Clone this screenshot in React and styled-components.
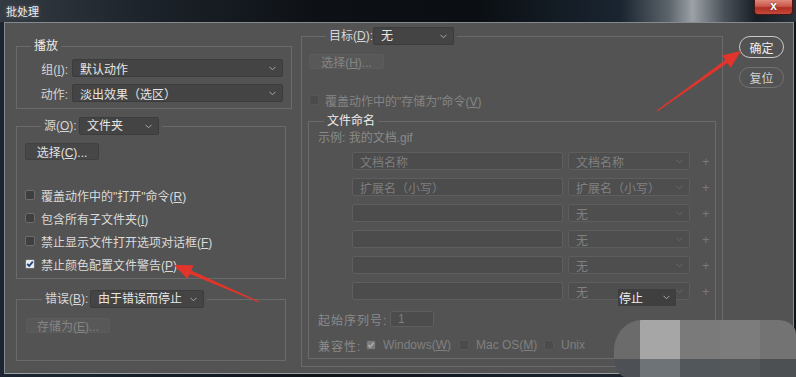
import React from "react";
import styled, { createGlobalStyle } from "styled-components";

const GlobalStyle = createGlobalStyle`
  html, body { margin: 0; padding: 0; background: #10151a; }
  body { font-family: "Liberation Sans", "Noto Sans CJK SC", sans-serif; }
  * { box-sizing: border-box; }
`;

const Window = styled.div`
  position: relative;
  width: 796px;
  height: 377px;
  overflow: hidden;
  display: flex;
  flex-direction: column;
  background: linear-gradient(90deg, #1c2530 0%, #0e1318 40%, #1b222b 75%, #0f1419 100%);
`;

const TitleBar = styled.div`
  height: 22px;
  flex: none;
  display: flex;
  justify-content: space-between;
  align-items: flex-start;
  background: linear-gradient(
    90deg,
    #343b43 0%,
    #1d232a 18%,
    #0d1116 40%,
    #0b0f13 60%,
    #1a2531 78%,
    #5c646b 84%,
    #9ba1a6 87%,
    #4a5158 91%,
    #181e25 95%,
    #2a3038 100%
  );
`;

const Title = styled.div`
  margin: 5px 0 0 6px;
  font-family: "Noto Sans CJK SC", sans-serif;
  font-size: 11px;
  line-height: 13px;
  color: #ececec;
  text-shadow: 0 0 4px rgba(255, 255, 255, 0.35);
`;

const CloseButton = styled.div`
  width: 39px;
  height: 15px;
  margin-right: 3px;
  border: 1px solid #4a1712;
  border-top: none;
  border-radius: 0 0 4px 4px;
  background: linear-gradient(180deg, #e08a7c 0%, #c9574a 45%, #b12f22 55%, #c4493c 100%);
  color: #fff;
  font-family: "Liberation Sans", sans-serif;
  font-weight: bold;
  font-size: 12px;
  line-height: 13px;
  text-align: center;
  text-shadow: 0 0 2px #5a1a14;
`;

const Frame = styled.div`
  flex: 1;
  margin: 0 2px 3px 4px;
  background: #535353;
  border: 1px solid #858a8e;
  border-bottom-color: #9aa0a4;
  display: flex;
  align-items: flex-start;
  padding-left: 11px;
`;

const LeftColumn = styled.div`
  width: 276px;
  margin-top: 15px;
  display: flex;
  flex-direction: column;
`;

const Group = styled.fieldset`
  margin: ${(p) => p.$mt || 0}px 0 0 ${(p) => p.$ml || 0}px;
  padding: 0;
  width: ${(p) => p.$w}px;
  min-width: 0;
  border: 1px solid #6a6a6a;
`;

const Legend = styled.legend`
  margin-left: ${(p) => p.$ml}px;
  padding: 0 3px;
  display: flex;
  align-items: center;
  gap: 4px;
  font-size: 12px;
  line-height: 16px;
  color: ${(p) => (p.$bright ? "#ececec" : "#d6d6d6")};
`;

const LegendLabel = styled.span`
  width: ${(p) => p.$w}px;
  white-space: nowrap;
`;

const PlayGrid = styled.div`
  display: grid;
  grid-template-columns: 51px 211px;
  column-gap: 4px;
  row-gap: 7px;
  align-items: center;
  padding: 5px 0 6px 0;
`;

const FieldLabel = styled.span`
  text-align: right;
  font-size: 12px;
  color: #d6d6d6;
  white-space: nowrap;
`;

const Select = styled.div`
  width: ${(p) => p.$w}px;
  height: 18px;
  display: flex;
  align-items: center;
  justify-content: space-between;
  padding: 0 6px 0 7px;
  background: ${(p) => (p.$off ? "#4e4e4e" : "#444444")};
  border: 1px solid ${(p) => (p.$off ? "#5d5d5d" : "#3c3c3c")};
  border-radius: 2px;
  font-size: 12px;
  color: ${(p) => (p.$off ? "#808080" : "#e6e6e6")};
  white-space: nowrap;
`;

const Chevron = ({ off }) => (
  <svg width="7" height="5" viewBox="0 0 7 5">
    <polyline
      points="0.5,0.8 3.5,3.8 6.5,0.8"
      fill="none"
      stroke={off ? "#676767" : "#a8a8a8"}
      strokeWidth="1"
    />
  </svg>
);

const GroupBody = styled.div`
  padding: ${(p) => p.$pad};
  display: flex;
  flex-direction: column;
  align-items: flex-start;
`;

const Button = styled.div`
  width: ${(p) => p.$w}px;
  height: ${(p) => (p.$off ? 15 : 17)}px;
  display: flex;
  align-items: center;
  justify-content: center;
  background: ${(p) => (p.$off ? "#585858" : "#474747")};
  border: 1px solid ${(p) => (p.$off ? "#5c5c5c" : "#404040")};
  border-radius: 2px;
  font-size: 12px;
  color: ${(p) => (p.$off ? "#858585" : "#e2e2e2")};
`;

const CheckList = styled.div`
  margin-top: 27px;
  display: flex;
  flex-direction: column;
  gap: 7px;
`;

const CheckRow = styled.label`
  height: 16px;
  display: flex;
  align-items: center;
  gap: 6px;
  margin-top: ${(p) => p.$mt || 0}px;
  font-size: 12px;
  color: ${(p) => (p.$off ? "#858585" : "#dadada")};
  white-space: nowrap;
`;

const Box = styled.span`
  width: 10px;
  height: 10px;
  flex: none;
  display: flex;
  align-items: center;
  justify-content: center;
  border-radius: 2px;
  background: ${(p) =>
    p.$checked ? (p.$off ? "#7b7b7b" : "#e6e9ee") : p.$off ? "#4b4b4b" : "#3f3f3f"};
  border: 1px solid ${(p) => (p.$off ? "#585858" : "#6c6c6c")};
`;

const Check = ({ checked, off }) => (
  <Box $checked={checked} $off={off}>
    {checked && (
      <svg width="8" height="8" viewBox="0 0 8 8">
        <polyline
          points="1.2,4 3.2,6 6.8,1.6"
          fill="none"
          stroke={off ? "#a6a6a6" : "#23407a"}
          strokeWidth="1.8"
        />
      </svg>
    )}
  </Box>
);

const RightGroup = styled(Group)`
  margin: 4px 0 0 9px;
`;

const NamingBody = styled.div`
  padding: 1px 0 5px 9px;
  display: flex;
  flex-direction: column;
  font-size: 12px;
  color: #8a8a8a;
`;

const Example = styled.div`
  height: 16px;
  line-height: 16px;
  white-space: nowrap;
`;

const NameGrid = styled.div`
  margin: 6px 0 0 34px;
  display: grid;
  grid-template-columns: 211px 122px 12px;
  column-gap: 5px;
  row-gap: 8px;
  align-items: center;
`;

const NameInput = styled.div`
  width: ${(p) => p.$w || 211}px;
  height: ${(p) => p.$h || 18}px;
  padding-left: 7px;
  display: flex;
  align-items: center;
  background: #4c4c4c;
  border: 1px solid #5e5e5e;
  border-radius: 2px;
  font-size: 12px;
  color: #7e7e7e;
  white-space: nowrap;
`;

const Plus = styled.span`
  padding-left: 7px;
  font-size: 13px;
  color: #787878;
`;

const InfoRow = styled.div`
  margin-top: ${(p) => p.$mt}px;
  height: 16px;
  display: flex;
  align-items: center;
  white-space: nowrap;
`;

const InfoLabel = styled.span`
  width: ${(p) => p.$w}px;
  letter-spacing: 1px;
`;

const Option = styled.span`
  display: flex;
  align-items: center;
  gap: 7px;
  width: ${(p) => p.$w}px;
  font-size: 12px;
  color: #808080;
`;

const ButtonColumn = styled.div`
  margin: 13px 0 0 16px;
  display: flex;
  flex-direction: column;
  gap: 9px;
`;

const Pill = styled.div`
  width: 45px;
  height: ${(p) => (p.$primary ? 22 : 21)}px;
  display: flex;
  align-items: center;
  justify-content: center;
  border-radius: 11px;
  border: 1.5px solid ${(p) => (p.$primary ? "#c9c9c9" : "#737373")};
  font-size: 12px;
  color: ${(p) => (p.$primary ? "#ededed" : "#d2d2d2")};
`;

const Popup = styled.div`
  position: absolute;
  left: 618px;
  top: 289px;
  width: 58px;
  height: 17px;
  display: flex;
  align-items: center;
  justify-content: space-between;
  padding: 0 6px 0 5px;
  background: #3f3f3f;
  font-size: 12px;
  color: #f0f0f0;
  overflow: hidden;
`;

const PopupText = styled.span`
  margin-left: -4px;
  white-space: nowrap;
`;

const Mosaic = styled.div`
  position: absolute;
  left: 614px;
  top: 320px;
  width: 182px;
  height: 57px;
  display: grid;
  grid-template-columns: 26px 40px 40px 40px 36px;
  grid-template-rows: 39px 18px;
  border-radius: 28px 18px 0 12px / 30px 14px 0 20px;
  overflow: hidden;
`;

const Tile = styled.div`
  background: ${(p) => p.$c};
`;

const ArrowLayer = styled.svg`
  position: absolute;
  left: 0;
  top: 0;
  pointer-events: none;
`;

const tiles = [
  "#6b6b6b", "#a6a6a6", "#7a7a7a", "#7c7c7c", "#737373",
  "#4d5156", "#6e7377", "#52575b", "#55585b", "#4d5053",
];

const nameRows = [
  ["文档名称", "文档名称"],
  ["扩展名（小写）", "扩展名（小写）"],
  ["", "无"],
  ["", "无"],
  ["", "无"],
  ["", "无"],
];

export default function App() {
  return (
    <>
      <GlobalStyle />
      <Window>
        <TitleBar>
          <Title>批处理</Title>
          <CloseButton>x</CloseButton>
        </TitleBar>
        <Frame>
          <LeftColumn>
            <Group $w={276}>
              <Legend $ml={14} $bright>播放</Legend>
              <PlayGrid>
                <FieldLabel>组(<u>I</u>):</FieldLabel>
                <Select $w={211}>
                  默认动作 <Chevron />
                </Select>
                <FieldLabel>动作:</FieldLabel>
                <Select $w={211}>
                  淡出效果（选区） <Chevron />
                </Select>
              </PlayGrid>
            </Group>

            <Group $w={270} $mt={8}>
              <Legend $ml={24}>
                <LegendLabel $w={31}>源(<u>O</u>):</LegendLabel>
                <Select $w={80}>
                  文件夹 <Chevron />
                </Select>
              </Legend>
              <GroupBody $pad="8px 0 6px 8px">
                <Button $w={74}>
                  <span>选择(<u>C</u>)...</span>
                </Button>
                <CheckList>
                  <CheckRow>
                    <Check />
                    <span>覆盖动作中的"打开"命令(<u>R</u>)</span>
                  </CheckRow>
                  <CheckRow>
                    <Check />
                    <span>包含所有子文件夹(<u>I</u>)</span>
                  </CheckRow>
                  <CheckRow>
                    <Check />
                    <span>禁止显示文件打开选项对话框(<u>F</u>)</span>
                  </CheckRow>
                  <CheckRow>
                    <Check checked />
                    <span>禁止颜色配置文件警告(<u>P</u>)</span>
                  </CheckRow>
                </CheckList>
              </GroupBody>
            </Group>

            <Group $w={270} $mt={11}>
              <Legend $ml={25}>
                <LegendLabel $w={41}>错误(<u>B</u>):</LegendLabel>
                <Select $w={114}>
                  由于错误而停止 <Chevron />
                </Select>
              </Legend>
              <GroupBody $pad="10px 0 27px 9px">
                <Button $w={84} $off>
                  <span>存储为(<u>E</u>)...</span>
                </Button>
              </GroupBody>
            </Group>
          </LeftColumn>

          <RightGroup $w={422}>
            <Legend $ml={24}>
              <LegendLabel $w={40}>目标(<u>D</u>):</LegendLabel>
              <Select $w={81}>
                无 <Chevron />
              </Select>
            </Legend>
            <GroupBody $pad="9px 0 7px 7px">
              <Button $w={75} $off>
                <span>选择(<u>H</u>)...</span>
              </Button>
              <CheckRow $off $mt={23}>
                <Check off />
                <span>覆盖动作中的"存储为"命令(<u>V</u>)</span>
              </CheckRow>
              <Group $w={408} $mt={5} $ml={-1}>
                <Legend $ml={15} $bright>文件命名</Legend>
                <NamingBody>
                  <Example>示例: 我的文档.gif</Example>
                  <NameGrid>
                    {nameRows.map(([input, choice], i) => (
                      <React.Fragment key={i}>
                        <NameInput>{input}</NameInput>
                        <Select $w={122} $off>
                          {choice} <Chevron off />
                        </Select>
                        <Plus>+</Plus>
                      </React.Fragment>
                    ))}
                  </NameGrid>
                  <InfoRow $mt={11}>
                    <InfoLabel $w={72}>起始序列号:</InfoLabel>
                    <NameInput $w={44} $h={16}>1</NameInput>
                  </InfoRow>
                  <InfoRow $mt={10}>
                    <InfoLabel $w={48}>兼容性:</InfoLabel>
                    <Option $w={93}>
                      <Check checked off />
                      <span>Windows(<u>W</u>)</span>
                    </Option>
                    <Option $w={85}>
                      <Check off />
                      <span>Mac OS(<u>M</u>)</span>
                    </Option>
                    <Option $w={50}>
                      <Check off />
                      <span>Unix</span>
                    </Option>
                  </InfoRow>
                </NamingBody>
              </Group>
            </GroupBody>
          </RightGroup>

          <ButtonColumn>
            <Pill $primary>确定</Pill>
            <Pill>复位</Pill>
          </ButtonColumn>
        </Frame>

        <Popup>
          <PopupText>停止</PopupText>
          <Chevron />
        </Popup>

        <Mosaic>
          {tiles.map((c, i) => (
            <Tile key={i} $c={c} />
          ))}
        </Mosaic>

        <ArrowLayer width="796" height="377" viewBox="0 0 796 377">
          <polygon
            fill="#e3342b"
            points="657.3,111.4 727.3,62.9 730.6,67.8 741,51 722,55.4 725.3,60.1 656.7,110.6"
          />
          <polygon
            fill="#e3342b"
            points="259.2,301.5 191.2,270.5 193.5,265.3 174,265 187.5,279 189.8,273.9 258.8,302.5"
          />
        </ArrowLayer>
      </Window>
    </>
  );
}
